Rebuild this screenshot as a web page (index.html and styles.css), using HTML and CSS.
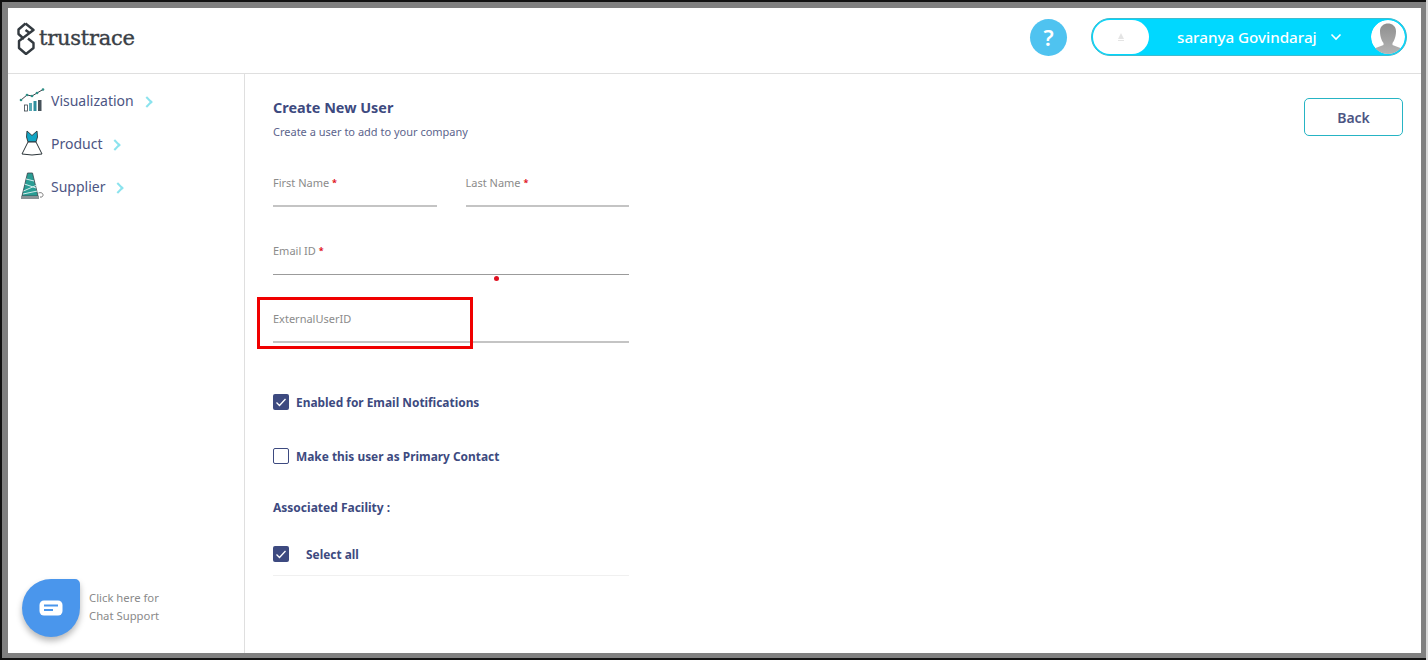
FILE: index.html
```html
<!DOCTYPE html>
<html lang="en">
<head>
<meta charset="utf-8">
<title>Create New User</title>
<link rel="stylesheet" href="styles.css">
</head>
<body>
<div class="frame">
  <header class="topbar">
    <div class="logo">
      <svg class="logo-mark" viewBox="0 0 20 33" width="20" height="33"><path d="M9.500 1.500 L17.500 8 L3 19 L3 26 L10 32 L17.500 26 L17.500 21 L12 16.500 M9.500 1.500 L2.500 7.500 L2.500 12 L8 17 M9.500 8 L13 10.500" fill="none" stroke="#333a40" stroke-width="2.400" stroke-linejoin="round"/></svg>
      <span class="logo-text">trustrace</span>
    </div>
    <div class="top-right">
      <div class="help">?</div>
      <div class="user-pill">
        <div class="pill-blank"><svg viewBox="0 0 10 10" width="10" height="10"><path d="M5 1 L8 7 H2 Z M2 8 H8 V9 H2 Z" fill="#e4e4e4"/></svg></div>
        <span class="user-name">saranya Govindaraj</span>
        <svg class="user-caret" viewBox="0 0 12 8" width="12" height="8"><path d="M1.500 1.500 L6 6 L10.500 1.500" fill="none" stroke="#fff" stroke-width="1.600"/></svg>
        <div class="avatar">
          <svg viewBox="0 0 34 34" width="34" height="34"><defs><linearGradient id="av" x1="0" y1="0" x2="0" y2="1"><stop offset="0" stop-color="#8f8f8f"/><stop offset="1" stop-color="#b4b4b4"/></linearGradient></defs><circle cx="17" cy="17" r="17" fill="#fff"/><path d="M9 11 C9 1 25 1 25 11 C25 17 23 21 21.500 23 L21.500 25 L32 29 C27 36 7 36 2 29 L12.500 25 L12.500 23 C11 21 9 17 9 11 Z" fill="url(#av)"/></svg>
        </div>
      </div>
    </div>
  </header>
  <div class="body">
    <aside class="sidebar">
      <nav class="nav">
        <a class="nav-item">
          <svg class="nav-icon" viewBox="0 0 26 24" width="26" height="24"><path d="M2 12 L8 7 L13 8 L18 5 L24 1.500" fill="none" stroke="#39424a" stroke-width="1"/><g fill="#2f8f86"><circle cx="2" cy="12" r="1.300"/><circle cx="8" cy="7" r="1.300"/><circle cx="13" cy="8" r="1.300"/><circle cx="18" cy="5" r="1.300"/><circle cx="24" cy="1.500" r="1.300"/></g><rect x="5.500" y="17" width="3" height="6" fill="#fff" stroke="#39424a" stroke-width=".8"/><rect x="10" y="15" width="3" height="8" fill="#5aa9b5"/><rect x="14.500" y="13" width="3" height="10" fill="#2f8f9f"/><rect x="19" y="12" width="3.500" height="11" fill="#47525a"/></svg>
          <span>Visualization</span><i class="chev"></i>
        </a>
        <a class="nav-item">
          <svg class="nav-icon" viewBox="0 0 26 26" width="26" height="26"><path d="M8 1 L13 5.500 L18 1 L18.500 7 L17 12 H9 L7.500 7 Z" fill="#12a5c4" stroke="#2a3338" stroke-width=".9"/><path d="M9 12 L3 24 Q13 26 23 24 L17 12 Z" fill="#fff" stroke="#2a3338" stroke-width="1"/></svg>
          <span>Product</span><i class="chev"></i>
        </a>
        <a class="nav-item">
          <svg class="nav-icon" viewBox="0 0 26 28" width="26" height="28"><path d="M8.500 1 H13.500 L19 24 H3 Z" fill="#2a9d94" stroke="#39424a" stroke-width=".8"/><path d="M7 7 L15 9 M5.500 12 L17 16 M4.500 19 L18 13 M4 22 L18.500 19" stroke="#d5ecec" stroke-width="1" fill="none"/><rect x="2" y="24" width="18" height="3" fill="#8a9296"/><path d="M19.500 21 C25 19 25.500 26 21 25" fill="none" stroke="#777" stroke-width="1"/></svg>
          <span>Supplier</span><i class="chev"></i>
        </a>
      </nav>
      <div class="chat">
        <div class="chat-bubble">
          <svg viewBox="0 0 24 16" width="24" height="16"><rect x="0.500" y="0.500" width="23" height="15" rx="4.500" fill="#fff"/><path d="M5 5.500 H19 M5 10 H14" stroke="#4a96ec" stroke-width="2"/></svg>
        </div>
        <p class="chat-text">Click here for<br>Chat Support</p>
      </div>
    </aside>
    <main class="content">
      <div class="form-head">
        <div>
          <h1 class="title">Create New User</h1>
          <p class="subtitle">Create a user to add to your company</p>
        </div>
        <button class="back" type="button">Back</button>
      </div>
      <div class="form">
        <div class="row">
          <div class="field"><label>First Name <b>*</b></label></div>
          <div class="field"><label>Last Name <b>*</b></label></div>
        </div>
        <div class="field field-dark field-next">
          <label>Email ID <b>*</b></label>
          <span class="dot"></span>
        </div>
        <div class="field field-next">
          <label>ExternalUserID</label>
          <span class="highlight"></span>
        </div>
        <div class="check check-first"><span class="box on"><svg viewBox="0 0 16 16" width="16" height="16"><path d="M3.500 8.500 L6.500 11.500 L12.500 5" fill="none" stroke="#fff" stroke-width="1.300"/></svg></span>Enabled for Email Notifications</div>
        <div class="check"><span class="box"></span>Make this user as Primary Contact</div>
        <div class="assoc">Associated Facility :</div>
        <div class="check check-all"><span class="box on"><svg viewBox="0 0 16 16" width="16" height="16"><path d="M3.500 8.500 L6.500 11.500 L12.500 5" fill="none" stroke="#fff" stroke-width="1.300"/></svg></span>Select all</div>
      </div>
    </main>
  </div>
</div>
</body>
</html>
```
FILE: styles.css
```css
* { box-sizing: border-box; }
html, body { margin: 0; height: 100%; }
body {
  background: #111;
  padding: 2px 0 2px 2px;
  border-right: 2px solid #d8d8d8;
  font-family: "Noto Sans", "Open Sans", sans-serif;
  overflow: hidden;
}
.frame {
  width: 1424px;
  height: 656px;
  border: 6px solid #808080;
  border-right-width: 5px;
  border-bottom-width: 5px;
  background: #fff;
  display: flex;
  flex-direction: column;
}
.topbar {
  height: 66px;
  flex: none;
  border-bottom: 1px solid #dfdfdf;
  display: flex;
  align-items: center;
  justify-content: space-between;
  padding: 0 14px 7px 8px;
}
.logo { display: flex; align-items: center; gap: 3px; margin-top: 2px; }
.logo-text { font-family: "DejaVu Serif", serif; font-size: 21px; font-weight: 400; color: #3a4046; letter-spacing: -0.25px; -webkit-text-stroke: 0.4px #3a4046; }
.top-right { display: flex; align-items: center; gap: 24px; }
.help {
  width: 37px; height: 37px; border-radius: 50%;
  background: #4fc3f0; color: #fff; font-weight: 600; font-size: 22px;
  display: flex; align-items: center; justify-content: center;
}
.user-pill {
  width: 316px; height: 38px; border-radius: 19px;
  background: #00d8ff; border: 1px solid #3fbccf;
  display: flex; align-items: center;
}
.pill-blank {
  width: 56px; height: 34px; margin-left: 1px; border-radius: 17px; background: #fff;
  display: flex; align-items: center; justify-content: center;
}
.user-name { margin-left: 28px; color: #fff; font-size: 15.200px; font-weight: 500; white-space: nowrap; }
.user-caret { margin-left: 13px; }
.avatar { margin-left: auto; width: 34px; height: 34px; margin-right: 1px; border-radius: 50%; overflow: hidden; }
.body { flex: 1; display: flex; min-height: 0; }
.sidebar {
  width: 237px; flex: none; border-right: 1px solid #dfdfdf;
  display: flex; flex-direction: column; justify-content: space-between;
  padding: 13px 0 16px 0;
}
.nav { display: flex; flex-direction: column; gap: 17px; padding-left: 11px; }
.nav-item { height: 26px; display: flex; align-items: center; color: #4c5583; font-size: 14px; }
.nav-icon { flex: none; margin-right: 6px; }
.chev {
  width: 8px; height: 8px; margin-left: 9px; margin-top: 3px;
  border-top: 2.500px solid #8be3ee; border-right: 2.500px solid #8be3ee;
  transform: rotate(45deg);
}
.chat { display: flex; align-items: center; padding-left: 14px; gap: 9px; }
.chat-bubble {
  width: 58px; height: 58px; background: #4a96ec;
  border-radius: 50% 5px 50% 50%;
  box-shadow: 0 4px 6px rgba(0,0,0,.28);
  display: flex; align-items: center; justify-content: center;
}
.chat-text { margin: -2px 0 0; font-size: 11.300px; line-height: 18px; color: #8a8a8a; }
.content { flex: 1; padding: 24px 18px 0 28px; }
.form-head { display: flex; justify-content: space-between; align-items: flex-start; }
.title { margin: 0; font-size: 14.400px; line-height: 20px; font-weight: 700; color: #3d4a80; }
.subtitle { margin: 6px 0 0; font-size: 11px; line-height: 16px; color: #5c648c; }
.back {
  width: 99px; height: 38px;
  background: #fff; border: 1.500px solid #26b4c4; border-radius: 5px;
  color: #4c5583; font: 600 14px "Noto Sans", sans-serif;
}
.form { width: 356px; margin-top: 32px; }
.row { display: flex; gap: 29px; }
.row .field { flex: 1; }
.field {
  height: 35px; border-bottom: 2px solid #c4c4c4;
  position: relative; padding-top: 3px;
}
.field label { font-size: 11px; line-height: 16px; color: #8b8b8b; display: block; }
.field b { color: #e01020; font-weight: 700; font-size: 9px; vertical-align: 1px; }
.field-dark { border-bottom: 1px solid #9b9b9b; }
.field-next { margin-top: 33px; }
.dot { position: absolute; left: 221px; top: 36px; width: 5px; height: 5px; border-radius: 50%; background: #e01020; }
.highlight {
  position: absolute; left: -16px; top: -11px;
  width: 216px; height: 52px; border: 3px solid #f00000;
}
.check {
  display: flex; align-items: center; gap: 7px; height: 18px;
  margin-top: 36px;
  font-size: 11.900px; font-weight: 700; color: #3d4a80;
}
.check-first { margin-top: 50px; }
.box { width: 16px; height: 16px; flex: none; border: 1.500px solid #3d4a80; border-radius: 2px; background: #fff; }
.box.on { background: #3d4a80; border: 0; }
.box svg { display: block; }
.assoc { margin-top: 34px; font-size: 12px; line-height: 18px; font-weight: 700; color: #3d4a80; }
.check-all {
  margin-top: 28px; gap: 17px; height: 31px; padding-bottom: 13px;
  border-bottom: 1px solid #f0f0f0;
}
```
